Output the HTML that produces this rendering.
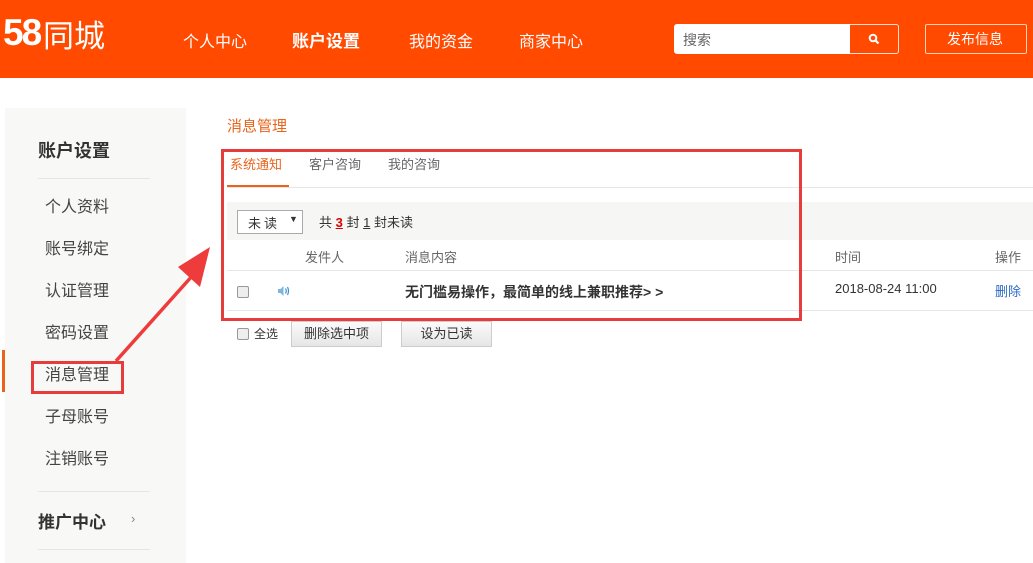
<!DOCTYPE html>
<html><head><meta charset="utf-8"><style>
*{margin:0;padding:0;box-sizing:border-box}
body{width:1033px;height:563px;overflow:hidden;background:#fff;font-family:"Liberation Sans","Noto Sans CJK SC",sans-serif;position:relative;color:#333}
.a{position:absolute;white-space:nowrap}
.hdr{position:absolute;left:0;top:0;width:1033px;height:78px;background:#ff4a00}
.nav{color:#fff;font-size:16px;top:28px}
.side{position:absolute;left:5px;top:108px;width:181px;height:455px;background:#f8f8f6}
.si{font-size:16px;color:#444;left:45px}
.line{position:absolute;height:1px;background:#e6e6e6}
.f13{font-size:13px}
.cb{position:absolute;width:12px;height:12px;border:1px solid #999;border-radius:2px;background:#eee}
.btn{position:absolute;height:26px;border:1px solid #ccc;background:linear-gradient(#fafafa,#e6e6e6);font-size:13px;text-align:center;line-height:24px;color:#333}
</style></head><body>
<div class="hdr"></div>
<div class="a" style="left:3px;top:12px;color:#fff;font-size:37px;font-weight:bold;letter-spacing:-2px">58</div>
<div class="a" style="left:43px;top:11px;color:#fff;font-size:31px">同城</div>
<div class="a nav" style="left:183px">个人中心</div>
<div class="a nav" style="left:292px;font-weight:bold;font-size:17px;top:27px">账户设置</div>
<div class="a nav" style="left:409px">我的资金</div>
<div class="a nav" style="left:519px">商家中心</div>
<div style="position:absolute;left:674px;top:24px;width:225px;height:30px;background:#fff;border-radius:3px;border:1px solid #fff"></div>
<div class="a" style="left:683px;top:30px;font-size:14px;color:#666">搜索</div>
<div style="position:absolute;left:850px;top:24px;width:49px;height:30px;background:#ff4a00;border:1px solid #fdd;border-left:none;border-radius:0 3px 3px 0"></div>
<svg class="a" style="left:868px;top:33px" width="12" height="12" viewBox="0 0 12 12"><circle cx="5" cy="5" r="3.3" fill="none" stroke="#fff" stroke-width="2"/><path d="M7.5 7.5L10.5 10.5" stroke="#fff" stroke-width="2.2"/></svg>
<div style="position:absolute;left:925px;top:24px;width:102px;height:30px;border:1px solid #ffd2bd;border-radius:2px"></div>
<div class="a" style="left:947px;top:29px;color:#fff;font-size:14px">发布信息</div>

<div class="side"></div>
<div class="a" style="left:38px;top:137px;font-size:18px;font-weight:bold;color:#333">账户设置</div>
<div class="line" style="left:38px;top:178px;width:112px"></div>
<div class="a si" style="top:193px">个人资料</div>
<div class="a si" style="top:235px">账号绑定</div>
<div class="a si" style="top:277px">认证管理</div>
<div class="a si" style="top:319px">密码设置</div>
<div class="a si" style="top:361px">消息管理</div>
<div class="a si" style="top:403px">子母账号</div>
<div class="a si" style="top:445px">注销账号</div>
<div style="position:absolute;left:2px;top:350px;width:3px;height:42px;background:#e8641c"></div>
<div class="line" style="left:38px;top:491px;width:112px"></div>
<div class="a" style="left:38px;top:508px;font-size:17px;font-weight:bold;color:#333">推广中心</div>
<div class="a" style="left:131px;top:511px;font-size:13px;color:#888">›</div>
<div class="line" style="left:38px;top:549px;width:112px"></div>

<div class="a" style="left:227px;top:115px;font-size:15px;color:#e8641c">消息管理</div>
<div class="a" style="left:230px;top:154px;font-size:13px;color:#e8641c">系统通知</div>
<div class="a" style="left:309px;top:154px;font-size:13px;color:#666">客户咨询</div>
<div class="a" style="left:388px;top:154px;font-size:13px;color:#666">我的咨询</div>
<div class="line" style="left:227px;top:187px;width:806px"></div>
<div style="position:absolute;left:227px;top:185px;width:62px;height:2px;background:#e8641c"></div>
<div style="position:absolute;left:227px;top:202px;width:806px;height:38px;background:#f6f6f4"></div>
<div style="position:absolute;left:237px;top:210px;width:66px;height:24px;border:1px solid #aaa;background:#fff"></div>
<div class="a f13" style="left:248px;top:213px;letter-spacing:3px">未读</div>
<div class="a" style="left:289px;top:214px;font-size:9px">▼</div>
<div class="a f13" style="left:319px;top:212px">共 <b style="color:#d00;text-decoration:underline">3</b> 封 <u>1</u> 封未读</div>
<div class="a f13" style="left:305px;top:247px;color:#666">发件人</div>
<div class="a f13" style="left:405px;top:247px;color:#666">消息内容</div>
<div class="a f13" style="left:835px;top:247px;color:#666">时间</div>
<div class="a f13" style="left:995px;top:247px;color:#666">操作</div>
<div class="line" style="left:227px;top:270px;width:806px"></div>
<div class="cb" style="left:237px;top:286px"></div>
<svg class="a" style="left:277px;top:284px" width="14" height="14" viewBox="0 0 14 14"><path d="M1 5H3.5L6.5 2V12L3.5 9H1Z" fill="#7fb6dd"/><path d="M8.5 4.5Q10 7 8.5 9.5M10.5 3Q12.5 7 10.5 11" fill="none" stroke="#3a8fd0" stroke-width="1.2"/></svg>
<div class="a" style="left:405px;top:282px;font-size:14px;font-weight:bold;color:#333">无门槛易操作，最简单的线上兼职推荐&gt; &gt;</div>
<div class="a f13" style="left:835px;top:281px">2018-08-24 11:00</div>
<div class="a f13" style="left:995px;top:281px;color:#2a6ac8">删除</div>
<div class="line" style="left:227px;top:310px;width:806px"></div>
<div class="cb" style="left:237px;top:328px"></div>
<div class="a" style="left:254px;top:325px;font-size:12px">全选</div>
<div class="btn" style="left:291px;top:321px;width:91px">删除选中项</div>
<div class="btn" style="left:401px;top:321px;width:91px">设为已读</div>

<div style="position:absolute;left:221px;top:149px;width:581px;height:172px;border:3px solid #e63c3c"></div>
<div style="position:absolute;left:31px;top:361px;width:93px;height:33px;border:3px solid #e63c3c"></div>
<svg class="a" style="left:100px;top:235px" width="120" height="135"><path d="M16 126L93 40" stroke="#ee3b3b" stroke-width="3.5"/><path d="M110 12L78 32L100 52Z" fill="#ee3b3b"/></svg>
</body></html>
